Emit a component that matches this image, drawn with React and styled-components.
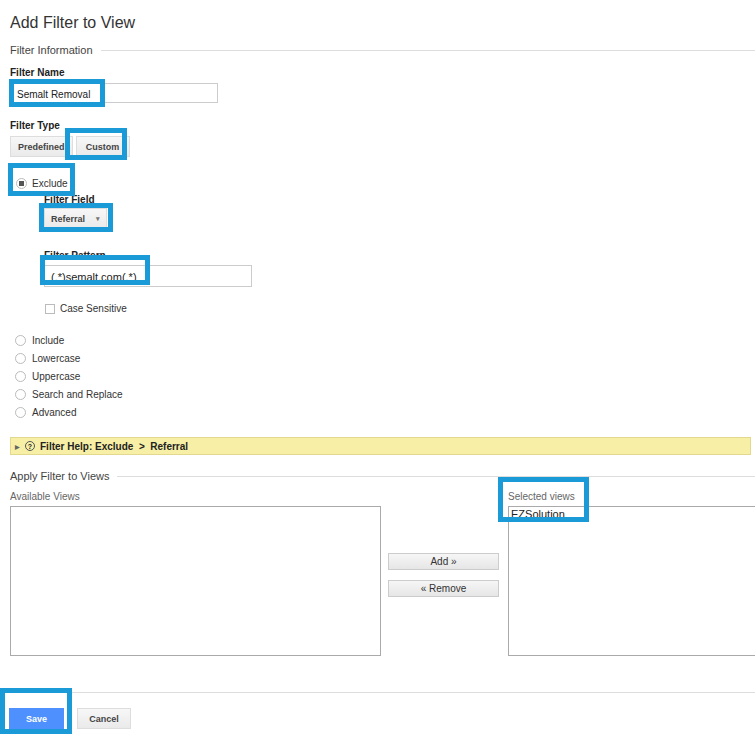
import React from "react";
import styled, { createGlobalStyle } from "styled-components";

const G = createGlobalStyle`
  body{margin:0;background:#fff;font-family:Arial,"Liberation Sans",sans-serif;color:#333;}
`;
const Page = styled.div`position:relative;width:755px;height:738px;overflow:hidden;padding:0 0 0 10px;box-sizing:border-box;`;
const Title = styled.h1`margin:0;padding-top:14px;font-size:16px;font-weight:normal;color:#333;line-height:18px;`;
const Section = styled.div`display:flex;align-items:center;gap:8px;margin-top:${p=>p.mt}px;font-size:11px;color:#444;
  &::after{content:"";flex:1;border-top:1px solid #ddd;}`;
const Label = styled.div`font-size:10px;font-weight:bold;color:#222;margin-top:${p=>p.mt}px;margin-left:${p=>p.ml||0}px;`;
const Input = styled.div`width:${p=>p.w}px;height:${p=>p.h||20}px;border:1px solid #ccc;margin-top:${p=>p.mt||3}px;margin-left:${p=>p.ml||0}px;box-sizing:border-box;
  font-size:${p=>p.fs||10}px;padding:5px 6px;color:#222;`;
const Row = styled.div`display:flex;gap:${p=>p.gap||0}px;align-items:${p=>p.top?"flex-start":"center"};margin-top:${p=>p.mt||0}px;margin-left:${p=>p.ml||0}px;`;
const Btn = styled.div`height:21px;padding:0 ${p=>p.px||7}px;box-sizing:border-box;border:1px solid #ddd;background:linear-gradient(#f7f7f7,#eaeaea);
  display:flex;align-items:center;justify-content:${p=>p.split?"space-between":"center"};font-size:9px;font-weight:bold;color:#444;width:${p=>p.w?p.w+"px":"auto"};`;
const Caret = styled.span`font-size:7px;color:#777;`;
const Radio = styled.span`width:11px;height:11px;border:1px solid #bbb;border-radius:50%;box-sizing:border-box;display:inline-flex;align-items:center;justify-content:center;
  background:#fff;&::after{content:"";width:5px;height:5px;background:${p=>p.on?"#555":"transparent"};}`;
const RText = styled.span`font-size:10px;color:#333;`;
const Check = styled.span`width:10px;height:10px;border:1px solid #bbb;box-sizing:border-box;`;
const Help = styled.div`margin-top:${p=>p.mt}px;margin-right:4px;height:18px;background:#f7efa6;border:1px solid #e3d98e;box-sizing:border-box;display:flex;align-items:center;gap:5px;padding-left:4px;font-size:10px;font-weight:bold;color:#222;`;
const Tri = styled.span`font-size:6px;color:#666;`;
const Q = styled.span`width:10px;height:10px;border:1px solid #555;border-radius:50%;box-sizing:border-box;font-size:7px;display:inline-flex;align-items:center;justify-content:center;`;
const Col = styled.div`margin-left:${p=>p.ml||0}px;margin-top:${p=>p.mt||0}px;display:flex;flex-direction:column;gap:${p=>p.gap||0}px;`;
const Small = styled.div`font-size:10px;color:#666;`;
const Box = styled.div`width:${p=>p.w}px;height:150px;border:1px solid #aaa;box-sizing:border-box;margin-top:4px;font-size:11px;color:#222;padding:1px 2px;`;
const GrayBtn = styled.div`width:111px;height:17px;border:1px solid #ccc;background:linear-gradient(#f6f6f6,#e6e6e6);box-sizing:border-box;font-size:10px;color:#333;display:flex;align-items:center;justify-content:center;`;
const Sep = styled.div`margin-top:${p=>p.mt}px;margin-left:-10px;border-top:1px solid #ddd;`;
const Save = styled.div`width:55px;height:21px;background:#4d90fe;color:#fff;font-size:9px;font-weight:bold;display:flex;align-items:center;justify-content:center;`;
const HL = styled.div`position:absolute;border:5px solid #1a9ad6;box-sizing:border-box;pointer-events:none;`;

const hl=[[9,79,96,28],[65,128,62,32],[8,163,67,33],[39,203,74,29],[40,255,110,30],[498,477,91,45],[0,688,72,46]];

export default function App(){
  return <Page><G/>
    <Title>Add Filter to View</Title>
    <Section mt={12}>Filter Information</Section>
    <Label mt={11}>Filter Name</Label>
    <Input w={208} mt={5}>Semalt Removal</Input>
    <Label mt={17}>Filter Type</Label>
    <Row mt={5} gap={3}><Btn>Predefined</Btn><Btn w={54}>Custom</Btn></Row>
    <Row mt={21} gap={5} ml={6}><Radio on/><RText>Exclude</RText></Row>
    <Label mt={5} ml={34}>Filter Field</Label>
    <Row mt={3} ml={34}><Btn w={63} px={6} split>Referral<Caret>▾</Caret></Btn></Row>
    <Label mt={21} ml={34}>Filter Pattern</Label>
    <Input w={208} h={22} fs={11} ml={34} mt={4}>(.*)semalt.com(.*)</Input>
    <Row mt={16} ml={35} gap={5}><Check/><RText>Case Sensitive</RText></Row>
    {["Include","Lowercase","Uppercase","Search and Replace","Advanced"].map((t,i)=>
      <Row key={t} mt={i?7:21} ml={5} gap={6}><Radio/><RText>{t}</RText></Row>)}
    <Help mt={19}><Tri>▶</Tri><Q>?</Q>Filter Help: Exclude &nbsp;&gt;&nbsp; Referral</Help>
    <Section mt={15}>Apply Filter to Views</Section>
    <Row mt={9} top>
      <Col><Small>Available Views</Small><Box w={371}/></Col>
      <Col ml={7} mt={62} gap={10}><GrayBtn>Add »</GrayBtn><GrayBtn>« Remove</GrayBtn></Col>
      <Col ml={9}><Small>Selected views</Small><Box w={250}>EZSolution</Box></Col>
    </Row>
    <Sep mt={36}/>
    <Row mt={15} gap={13} style={{marginLeft:-1}}><Save>Save</Save><Btn w={54}>Cancel</Btn></Row>
    {hl.map(([x,y,w,h],i)=><HL key={i} style={{left:x,top:y,width:w,height:h}}/>)}
  </Page>;
}
